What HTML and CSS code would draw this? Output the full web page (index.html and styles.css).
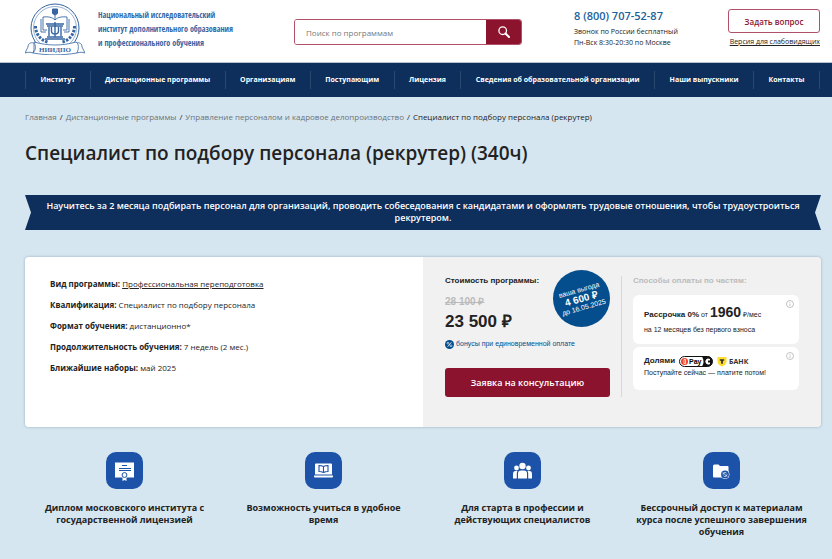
FILE: index.html
```html
<!DOCTYPE html>
<html lang="ru">
<head>
    <meta charset="UTF-8">
    <meta name="viewport" content="width=device-width, initial-scale=1.0">
    <title>Специалист по подбору персонала (рекрутер)</title>
    <link rel="stylesheet" href="styles.css">
</head>
<body>
    <header class="header">
        <a href="#" class="logo">
            <svg class="logo-icon" viewBox="0 0 60 52" fill="none" stroke="#3565a3">
                <circle cx="30" cy="25" r="24" stroke-width="1"/>
                <circle cx="30" cy="25" r="21.5" stroke-width="0.5"/>
                <path d="M27.5 6h5v4.500l-2.500 1.500-2.500-1.500z" fill="#3565a3"/>
                <path d="M30 12v5M30 17c-3-3-7-3.500-12-3v13h4M30 17c3-3 7-3.500 12-3v13h-4M16 16v13h5M44 16v13h-5" stroke-width="0.900"/>
                <path d="M21 21h18M22 23h16M24 24v9M36 24v9M30 19v15M26.500 24v4c0 4 7 4 7 0v-4M22 34h16M20 36h20" stroke-width="1.400"/>
                <path d="M10.500 23c0 8 5 14 12 16M49.500 23c0 8-5 14-12 16" stroke-width="3" stroke-dasharray="2.500 1.300"/>
                <path d="M9 40c-4-1-6 1-6 4l-3 6c3-1 5-1 8 0l1-3zM51 40c4-1 6 1 6 4l3 6c-3-1-5-1-8 0l-1-3z" fill="#fff" stroke-width="0.800"/>
                <path d="M9 39c14 4 28 4 42 0 3 2 3 6 1 11-15 2.500-29 2.500-44 0 3-3 3-7 1-11z" fill="#fff" stroke-width="0.800"/>
                <text x="30" y="49" class="logo-mark">НИИДПО</text>
            </svg>
            <span class="logo-text">Национальный исследовательский<br>институт дополнительного образования<br>и профессионального обучения</span>
        </a>
        <form class="search">
            <input type="text" class="search-box" placeholder="Поиск по программам" aria-label="Поиск по программам">
            <button type="submit" class="search-btn" aria-label="Найти">
                <svg width="12" height="12" viewBox="0 0 12 12" fill="none" stroke="#fff">
                    <circle cx="4.700" cy="4.700" r="3.800" stroke-width="1.300"/>
                    <path d="M7.500 7.500L11 11" stroke-width="2" stroke-linecap="round"/>
                </svg>
            </button>
        </form>
        <div class="phone">
            <a href="tel:88007075287" class="phone-number">8 (800) 707-52-87</a>
            <span>Звонок по России бесплатный</span>
            <span>Пн-Вск 8:30-20:30 по Москве</span>
        </div>
        <div class="header-actions">
            <button type="button" class="ask-btn">Задать вопрос</button>
            <a href="#" class="low-vision">Версия для слабовидящих</a>
        </div>
    </header>

    <nav class="nav">
        <ul class="nav-list">
            <li><a href="#">Институт</a></li>
            <li><a href="#">Дистанционные программы</a></li>
            <li><a href="#">Организациям</a></li>
            <li><a href="#">Поступающим</a></li>
            <li><a href="#">Лицензия</a></li>
            <li><a href="#">Сведения об образовательной организации</a></li>
            <li><a href="#">Наши выпускники</a></li>
            <li><a href="#">Контакты</a></li>
        </ul>
    </nav>

    <main class="main">
        <div class="breadcrumbs">
            <a href="#">Главная</a>
            <span>/</span>
            <a href="#">Дистанционные программы</a>
            <span>/</span>
            <a href="#">Управление персоналом и кадровое делопроизводство</a>
            <span>/</span>
            <span>Специалист по подбору персонала (рекрутер)</span>
        </div>

        <h1>Специалист по подбору персонала (рекрутер) (340ч)</h1>

        <div class="ribbon">Научитесь за 2 месяца подбирать персонал для организаций, проводить собеседования с кандидатами и оформлять трудовые отношения, чтобы трудоустроиться рекрутером.</div>

        <section class="card">
            <div class="info">
                <p><b>Вид программы:</b> <a href="#">Профессиональная переподготовка</a></p>
                <p><b>Квалификация:</b> Специалист по подбору персонала</p>
                <p><b>Формат обучения:</b> дистанционно*</p>
                <p><b>Продолжительность обучения:</b> 7 недель (2 мес.)</p>
                <p><b>Ближайшие наборы:</b> май 2025</p>
            </div>
            <div class="offer">
                <div class="price">
                    <h2 class="price-title">Стоимость программы:</h2>
                    <s class="price-old">28 100 ₽</s>
                    <div class="price-new">23 500 ₽</div>
                    <div class="bonus">
                        <svg width="9" height="9" viewBox="0 0 9 9">
                            <circle cx="4.500" cy="4.500" r="4.500" fill="#044e8d"/>
                            <path d="M6.300 2.300L2.700 6.700" stroke="#fff" stroke-width="0.800"/>
                            <circle cx="3" cy="3.200" r="0.900" fill="none" stroke="#fff" stroke-width="0.600"/>
                            <circle cx="6" cy="5.800" r="0.900" fill="none" stroke="#fff" stroke-width="0.600"/>
                        </svg>
                        бонусы при единовременной оплате
                    </div>
                    <button type="button" class="order-btn">Заявка на консультацию</button>
                    <div class="badge">
                        <div class="badge-text">ваша выгода<b>4 600 ₽</b>до 16.05.2025</div>
                    </div>
                </div>
                <div class="parts">
                    <h2 class="parts-title">Способы оплаты по частям:</h2>
                    <div class="part">
                        <div class="part-head"><b>Рассрочка 0%</b> от <b class="part-sum">1960</b> <small>₽/мес</small></div>
                        <div>на 12 месяцев без первого взноса</div>
                        <svg class="part-info" viewBox="0 0 8 8" fill="none" stroke="#aaa" stroke-width="0.700">
                            <circle cx="4" cy="4" r="3.500"/>
                            <path d="M4 3.500V6M4 2v0.800"/>
                        </svg>
                    </div>
                    <div class="part part-split">
                        <div class="part-logos">
                            <b>Долями</b>
                            <svg width="34" height="11" viewBox="0 0 34 11">
                                <rect x="0.500" y="0.500" width="33" height="10" rx="5" fill="#fff" stroke="#111"/>
                                <path d="M23 0.500h6a4.500 5 0 0 1 0 10h-6q3-5 0-10z" fill="#111"/>
                                <circle cx="5.500" cy="5.500" r="3.500" fill="#f0452d"/>
                                <path d="M5 3.500h1.500v4H5z" fill="none" stroke="#fff" stroke-width="0.700"/>
                                <text x="10" y="8" class="pay-mark">Pay</text>
                                <path d="M31 3a3 3 0 1 0 0 5V6.500h-2v-2h2z" fill="#fff"/>
                            </svg>
                            <svg width="34" height="11" viewBox="0 0 34 11">
                                <path d="M0.500 1h9v4.500c0 2.500-2 4-4.500 5-2.500-1-4.500-2.500-4.500-5z" fill="#ffdd2d"/>
                                <path d="M2.800 3.200h4.400v1.600h-1.300v3h-1.800v-3h-1.300z" fill="#333"/>
                                <text x="12" y="8" class="bank-mark">БАНК</text>
                            </svg>
                        </div>
                        <div>Поступайте сейчас — платите потом!</div>
                        <svg class="part-info" viewBox="0 0 8 8" fill="none" stroke="#aaa" stroke-width="0.700">
                            <circle cx="4" cy="4" r="3.500"/>
                            <path d="M4 3.500V6M4 2v0.800"/>
                        </svg>
                    </div>
                </div>
            </div>
        </section>

        <section class="features">
            <div class="feature">
                <svg viewBox="0 0 37 37">
                    <rect width="37" height="37" rx="10" fill="#1c53a8"/>
                    <path d="M9 10.500h19v15H9z" fill="#fff"/>
                    <path d="M16 13.500h5M13 16.500h12M13 18.500h12" stroke="#1c53a8" stroke-width="1"/>
                    <path d="M16.500 23v6l2-1 2 1v-6z" fill="#fff"/>
                    <circle cx="18.500" cy="23" r="2.400" fill="#fff" stroke="#1c53a8" stroke-width="1"/>
                </svg>
                <h3>Диплом московского института с государственной лицензией</h3>
            </div>
            <div class="feature">
                <svg viewBox="0 0 37 37">
                    <rect width="37" height="37" rx="10" fill="#1c53a8"/>
                    <path d="M10 12.500q0-1 1-1h15q1 0 1 1v10H10zM9 23.500h19v1q0 1-1 1H10q-1 0-1-1z" fill="#fff"/>
                    <path d="M18.500 14.500q-2-1-4.500-1v6q2.500 0 4.500 1 2-1 4.500-1v-6q-2.500 0-4.500 1zv6" fill="none" stroke="#1c53a8" stroke-width="1.100"/>
                </svg>
                <h3>Возможность учиться в удобное время</h3>
            </div>
            <div class="feature">
                <svg viewBox="0 0 37 37">
                    <rect width="37" height="37" rx="10" fill="#1c53a8"/>
                    <g fill="#fff">
                        <circle cx="18.500" cy="14" r="3.200"/>
                        <circle cx="12.500" cy="16" r="2.400"/>
                        <circle cx="24.500" cy="16" r="2.400"/>
                        <path d="M14 26.500v-5q0-3 3-3h3q3 0 3 3v5zM9 26.500V22q0-3 2.500-3h2q-0.700 1-0.700 2.500v5zM28 26.500V22q0-3-2.500-3h-2q0.700 1 0.700 2.500v5z"/>
                    </g>
                </svg>
                <h3>Для старта в профессии и действующих специалистов</h3>
            </div>
            <div class="feature">
                <svg viewBox="0 0 37 37">
                    <rect width="37" height="37" rx="10" fill="#1c53a8"/>
                    <path d="M10 14q0-1.500 1.500-1.500h4l1.500 1.500h7.500q1 0 1 1v10.500H11q-1 0-1-1z" fill="#fff"/>
                    <circle cx="22" cy="22.500" r="4.500" fill="#fff"/>
                    <circle cx="22" cy="22.500" r="3.900" fill="#1c53a8"/>
                    <path d="M20 22.500a2 2 0 0 1 3.500-1.300M24 22.500a2 2 0 0 1-3.500 1.300M20 20.500l4 4" fill="none" stroke="#fff" stroke-width="0.800"/>
                </svg>
                <h3>Бессрочный доступ к материалам курса после успешного завершения обучения</h3>
            </div>
        </section>
    </main>
</body>
</html>
```

FILE: styles.css
```css
* {
    box-sizing: border-box;
}
body {
    margin: 0;
    background: #d6e6f0;
    color: #222;
    font-family: "Open Sans", "Noto Sans", sans-serif;
    font-size: 8px;
    line-height: 12px;
}
h1, h2, h3, p {
    margin: 0;
}
a {
    color: inherit;
}
button {
    font-family: inherit;
    cursor: pointer;
}
.header {
    display: flex;
    align-items: flex-start;
    background: #fff;
    padding: 3px 12px 7px 25px;
}
.logo {
    display: flex;
    gap: 13px;
    width: 269px;
    color: #3565a3;
    text-decoration: none;
}
.logo-icon {
    flex-shrink: 0;
    width: 60px;
    height: 52px;
}
.logo-mark {
    font: bold 7px "Liberation Serif", serif;
    text-anchor: middle;
    fill: #3565a3;
    stroke: none;
}
.logo-text {
    padding-top: 5px;
    font-family: "Open Sans Condensed", "Liberation Sans", sans-serif;
    font-size: 8px;
    font-weight: 300;
    line-height: 14px;
    white-space: nowrap;
}
.search {
    display: flex;
    flex: 1;
    height: 26px;
    margin-top: 16px;
    border: 1px solid #b0506a;
    border-radius: 3px;
    overflow: hidden;
}
.search-box {
    flex: 1;
    min-width: 0;
    border: 0;
    padding: 0 11px;
    font-family: inherit;
    font-size: 8px;
    outline: none;
}
.search-box::placeholder {
    color: #777;
}
.search-btn {
    display: flex;
    align-items: center;
    justify-content: center;
    width: 35px;
    border: 0;
    padding: 0;
    background: #8c132e;
}
.phone {
    display: flex;
    flex-direction: column;
    width: 154px;
    margin-left: 52px;
    padding-top: 5px;
    font-size: 7px;
    line-height: 11px;
}
.phone-number {
    margin-bottom: 2px;
    color: #1c5f9c;
    font-size: 11px;
    font-weight: 600;
    line-height: 16px;
    text-decoration: none;
}
.header-actions {
    display: flex;
    flex-direction: column;
    align-items: flex-end;
    padding-top: 6px;
    font-size: 7px;
}
.ask-btn {
    width: 92px;
    height: 24px;
    margin-bottom: 3px;
    border: 1px solid #b0506a;
    border-radius: 3px;
    padding: 0;
    background: #fff;
    color: #8c132e;
    font-size: 8px;
    font-weight: 600;
}
.nav {
    background: #0e2e5c;
    border-top: 1px solid #b9c3d0;
    padding: 8px 12px 8px 25px;
}
.nav-list {
    display: flex;
    margin: 0;
    padding: 0;
    list-style: none;
    border-left: 1px solid #2b4871;
}
.nav-list li {
    flex: 1 1 auto;
    border-right: 1px solid #2b4871;
    text-align: center;
}
.nav-list a {
    color: #fff;
    font-size: 7px;
    font-weight: bold;
    line-height: 18px;
    text-decoration: none;
    white-space: nowrap;
}
.main {
    padding: 14px 11px 20px 25px;
}
.breadcrumbs {
    display: flex;
    gap: 3px;
}
.breadcrumbs a {
    color: #6b7379;
    text-decoration: none;
}
h1 {
    margin-top: 16px;
    font-size: 19px;
    font-weight: 600;
    line-height: 28px;
}
.ribbon {
    margin-top: 28px;
    padding: 5px 18px 6px;
    background: #0e2e5c;
    clip-path: polygon(0 0, 100% 0, calc(100% - 6px) 50%, 100% 100%, 0 100%, 6px 50%);
    color: #fff;
    font-size: 9px;
    font-weight: 600;
    text-align: center;
}
.card {
    display: grid;
    grid-template-columns: 1fr 1fr;
    margin-top: 27px;
    border-radius: 4px;
    box-shadow: 0 0 3px rgba(60, 90, 120, 0.4);
    overflow: hidden;
}
.info {
    display: flex;
    flex-direction: column;
    gap: 9px;
    padding: 21px 25px;
    background: #fff;
}
.offer {
    display: flex;
    padding: 19px 22px 30px;
    background: #f1f1f1;
    font-family: "Liberation Sans", Arial, sans-serif;
}
.price {
    position: relative;
    flex: 1;
    padding-right: 11px;
    border-right: 1px solid #d8d8d8;
}
.price-title, .parts-title {
    font-size: 8px;
    line-height: 10px;
}
.price-old {
    display: block;
    margin-top: 10px;
    color: #bbb;
    font-size: 10px;
    font-weight: bold;
}
.price-new {
    margin-top: 4px;
    font-size: 17px;
    font-weight: bold;
    line-height: 20px;
}
.bonus {
    display: flex;
    align-items: center;
    gap: 2px;
    margin-top: 6px;
    color: #044e8d;
    font-size: 7px;
}
.order-btn {
    width: 100%;
    height: 29px;
    margin-top: 18px;
    border: 0;
    border-radius: 3px;
    background: #8c132e;
    color: #fff;
    font-family: "Open Sans", sans-serif;
    font-size: 9px;
    font-weight: 600;
}
.badge {
    position: absolute;
    top: -6px;
    right: 11px;
    display: flex;
    align-items: center;
    justify-content: center;
    width: 57px;
    height: 57px;
    border-radius: 50%;
    background: #044e8d;
    color: #fff;
    font-size: 7px;
    line-height: 8px;
    text-align: center;
    white-space: nowrap;
}
.badge-text {
    transform: rotate(-16deg);
}
.badge b {
    display: block;
    font-size: 10px;
    line-height: 10px;
}
.parts {
    width: 177px;
    padding-left: 11px;
    font-size: 7px;
}
.parts-title {
    color: #bbb;
}
.part {
    position: relative;
    margin-top: 9px;
    padding: 8px 11px;
    border-radius: 6px;
    background: #fff;
    line-height: 12px;
}
.part-split {
    margin-top: 3px;
    padding-bottom: 11px;
}
.part-head {
    line-height: 18px;
}
.part-head b {
    font-size: 8px;
}
.part-head .part-sum {
    font-size: 14px;
}
.part-head small {
    font-size: 7px;
}
.part-logos {
    display: flex;
    align-items: center;
    gap: 4px;
    font-size: 8px;
}
.pay-mark {
    font: bold 7px "Liberation Sans", sans-serif;
}
.bank-mark {
    font: bold 7px "Open Sans", sans-serif;
    fill: #333;
}
.part-info {
    position: absolute;
    top: 5px;
    right: 5px;
    width: 8px;
    height: 8px;
}
.features {
    display: grid;
    grid-template-columns: repeat(4, 1fr);
    margin-top: 25px;
}
.feature {
    padding: 0 12px;
    text-align: center;
}
.feature svg {
    display: block;
    width: 37px;
    height: 37px;
    margin: 0 auto 13px;
}
.feature h3 {
    font-size: 9px;
    line-height: 12px;
}
```
